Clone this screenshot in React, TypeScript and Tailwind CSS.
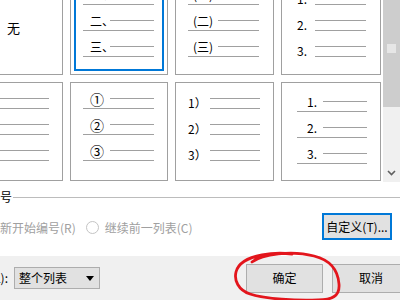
import type { ReactNode } from 'react';

// 编号样式里的一项：编号 + 短线，下面一条长线
function ItemA({ label, labelClass, size = 'text-[12px]' }: { label: string; labelClass: string; size?: string }) {
  return (
    <div className="flex h-[26px] flex-col">
      <div className="flex h-[22px] items-start">
        <span className={`${labelClass} ${size} mt-[5px] shrink-0 whitespace-nowrap leading-[16px] text-black`}>
          {label}
        </span>
        <span className="mt-[12px] h-px flex-1 bg-[#a0a0a0]" />
      </div>
      <div className="h-px bg-[#a0a0a0]" />
    </div>
  );
}

// 编号夹在两条短线中间
function ItemB({ label, labelClass }: { label: string; labelClass: string }) {
  return (
    <div className="flex h-[26px] items-start">
      <span className={`${labelClass} mt-[9px] shrink-0 whitespace-nowrap text-[12px] leading-[16px] text-black`}>
        {label}
      </span>
      <div className="flex flex-1 flex-col">
        <span className="mt-[12px] h-px bg-[#a0a0a0]" />
        <span className="mt-[9px] h-px bg-[#a0a0a0]" />
      </div>
    </div>
  );
}

function Tile({ children, selected = false }: { children: ReactNode; selected?: boolean }) {
  return (
    <div className="relative overflow-hidden border border-[#a0a0a0] bg-white">
      {children}
      {selected && <div className="pointer-events-none absolute inset-[3px] border-2 border-[#0078d7]" />}
    </div>
  );
}

export default function App() {
  return (
    <div className="relative h-[300px] w-[400px] overflow-hidden bg-white font-['Noto_Sans_CJK_SC',sans-serif] text-black">
      {/* 样式列表 */}
      <div className="flex h-[182px]">
        <div className="ml-[-36px] mt-[-22px] grid shrink-0 grid-cols-[99px_98px_99px_100px] grid-rows-[97px_99px] gap-[7px]">
          <Tile>
            <div className="flex h-full items-center justify-center pt-[2px] text-[13px]">无</div>
          </Tile>
          <Tile selected>
            <div className="ml-[12px] w-[71px] pt-[3px]">
              {['一、', '二、', '三、'].map((l) => (
                <ItemA key={l} label={l} labelClass="ml-[7px] w-[20px]" />
              ))}
            </div>
          </Tile>
          <Tile>
            <div className="ml-[12px] w-[71px] pt-[3px]">
              {['(一)', '(二)', '(三)'].map((l) => (
                <ItemA key={l} label={l} labelClass="ml-[5px] w-[25px]" />
              ))}
            </div>
          </Tile>
          <Tile>
            <div className="ml-[15px] w-[69px] pt-[3px]">
              {['1.', '2.', '3.'].map((l) => (
                <ItemB key={l} label={l} labelClass="w-[18px]" />
              ))}
            </div>
          </Tile>

          <Tile>
            <div className="ml-[12px] w-[72px] pt-[3px]">
              {['a)', 'b)', 'c)'].map((l) => (
                <ItemB key={l} label={l} labelClass="w-[22px]" />
              ))}
            </div>
          </Tile>
          <Tile>
            <div className="ml-[12px] w-[71px] pt-[3px]">
              {['①', '②', '③'].map((l) => (
                <ItemA key={l} label={l} labelClass="ml-[7px] w-[20px]" size="text-[14px]" />
              ))}
            </div>
          </Tile>
          <Tile>
            <div className="ml-[12px] w-[72px] pt-[3px]">
              {['1）', '2）', '3）'].map((l) => (
                <ItemB key={l} label={l} labelClass="w-[22px]" />
              ))}
            </div>
          </Tile>
          <Tile>
            <div className="ml-[15px] w-[70px] pt-[6px]">
              {['1.', '2.', '3.'].map((l) => (
                <ItemA key={l} label={l} labelClass="ml-[10px] w-[16px]" />
              ))}
            </div>
          </Tile>
        </div>

        {/* 滚动条 */}
        <div className="ml-[2px] flex h-[182px] w-[17px] shrink-0 flex-col bg-[#f0f0f0]">
          <div className="flex h-[107px] flex-col items-center bg-[#cdcdcd]">
            <div className="mt-[44px] h-[9px] w-[9px] bg-[#e6e6e6]" />
          </div>
          <div className="mt-auto mb-[6px] flex justify-center">
            <svg width="9" height="6" viewBox="0 0 9 6">
              <path d="M1 1 L4.5 4.5 L8 1" fill="none" stroke="#606060" strokeWidth="1.6" />
            </svg>
          </div>
        </div>
      </div>

      {/* 编号 */}
      <div className="mt-[8px] flex h-[14px] items-center">
        <span className="ml-[-12px] whitespace-nowrap text-[12px] leading-[14px]">编号</span>
        <span className="ml-[1px] h-px flex-1 bg-[#bcbcbc]" />
      </div>

      <div className="mt-[9px] flex h-[27px] items-center">
        <div className="mt-[2px] flex items-center text-[12px] leading-[14px] text-[#a0a0a0]">
          <span className="ml-[-12px] whitespace-nowrap">重新开始编号(R)</span>
          <span className="ml-[10px] h-[13px] w-[13px] rounded-full border border-[#c4c4c4] bg-white" />
          <span className="ml-[6px] whitespace-nowrap">继续前一列表(C)</span>
        </div>
        <div className="ml-auto mr-[8px] flex h-[27px] w-[70px] items-center justify-center border-2 border-[#0078d7] bg-[#e1e1e1] text-[12px] whitespace-nowrap">
          自定义(T)...
        </div>
      </div>

      {/* 底部 */}
      <div className="mt-[16px] flex h-[44px] items-center bg-[#f0f0f0] text-[12px]">
        <div className="flex w-[8px] shrink-0 justify-end">
          <span className="whitespace-nowrap">应用于(L):</span>
        </div>
        <div className="ml-[6px] flex h-[22px] w-[86px] shrink-0 items-center border border-[#adadad] bg-[#e1e1e1] pl-[4px]">
          <span className="whitespace-nowrap">整个列表</span>
          <svg className="ml-auto mr-[5px]" width="8" height="5" viewBox="0 0 8 5">
            <polygon points="0,0 8,0 4,5" fill="#000" />
          </svg>
        </div>
        <div className="ml-[146px] flex h-[29px] w-[77px] shrink-0 items-center justify-center border border-[#adadad] bg-[#e1e1e1]">
          确定
        </div>
        <div className="ml-[9px] flex h-[29px] w-[78px] shrink-0 items-center justify-center border border-[#adadad] bg-[#e1e1e1]">
          取消
        </div>
      </div>

      {/* 红圈标注 */}
      <svg className="pointer-events-none absolute left-0 top-0" width="400" height="300" viewBox="0 0 400 300">
        <path
          d="M252 262 C262 254 292 250 314 256 C330 260 338 270 339 284 C340 296 332 300 318 300 C296 301 266 299 250 294 C238 290 234 280 236 272 C238 264 246 258 262 255 C272 253 284 253 292 254"
          fill="none"
          stroke="#e3151c"
          strokeWidth="2.8"
          strokeLinecap="round"
        />
      </svg>
    </div>
  );
}
